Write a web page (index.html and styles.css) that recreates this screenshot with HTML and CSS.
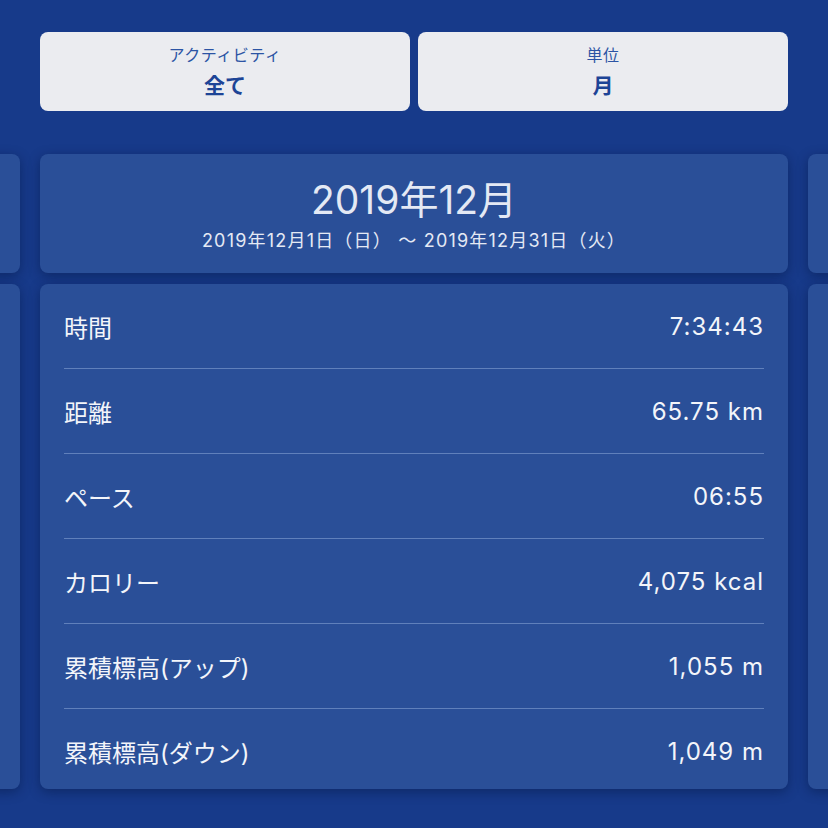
FILE: index.html
```html
<!DOCTYPE html>
<html lang="ja">
<head>
    <meta charset="UTF-8">
    <meta name="viewport" content="width=device-width, initial-scale=1.0">
    <title>集計</title>
    <link rel="stylesheet" href="styles.css">
</head>
<body>
    <div class="filters">
        <div class="filter">
            <span class="filter-label">アクティビティ</span>
            <span class="filter-value">全て</span>
        </div>
        <div class="filter">
            <span class="filter-label">単位</span>
            <span class="filter-value">月</span>
        </div>
    </div>

    <div class="pager">
        <!-- previous / next month, only the edges peek in -->
        <div class="page">
            <div class="card period"></div>
            <div class="card stats"></div>
        </div>

        <div class="page">
            <div class="card period">
                <div class="period-title">2019年12月</div>
                <div class="period-range">2019年12月1日（日） ～ 2019年12月31日（火）</div>
            </div>
            <div class="card stats">
                <div class="stat-row">
                    <span>時間</span>
                    <span class="stat-value">7:34:43</span>
                </div>
                <div class="stat-row">
                    <span>距離</span>
                    <span class="stat-value">65.75 km</span>
                </div>
                <div class="stat-row">
                    <span>ペース</span>
                    <span class="stat-value">06:55</span>
                </div>
                <div class="stat-row">
                    <span>カロリー</span>
                    <span class="stat-value">4,075 kcal</span>
                </div>
                <div class="stat-row">
                    <span>累積標高(アップ)</span>
                    <span class="stat-value">1,055 m</span>
                </div>
                <div class="stat-row">
                    <span>累積標高(ダウン)</span>
                    <span class="stat-value">1,049 m</span>
                </div>
            </div>
        </div>

        <div class="page">
            <div class="card period"></div>
            <div class="card stats"></div>
        </div>
    </div>
</body>
</html>
```

FILE: styles.css
```css
body {
    margin: 0;
    padding: 0;
    height: 828px;
    overflow: hidden;
    background-color: #173a8a;
    font-family: Inter, "Noto Sans CJK JP", sans-serif;
    color: #f3f5fa;
}

.filters {
    display: flex;
    gap: 8px;
    padding: 32px 40px 0;
}

.filter {
    flex: 1;
    height: 79px;
    box-sizing: border-box;
    padding-top: 13px;
    display: flex;
    flex-direction: column;
    align-items: center;
    background-color: #ebecf0;
    border-radius: 8px;
}

.filter-label {
    font-size: 16px;
    line-height: 20px;
    letter-spacing: 0.5px;
    color: #2c54a4;
}

.filter-value {
    margin-top: 7px;
    font-size: 21px;
    line-height: 28px;
    font-weight: bold;
    color: #1d4496;
}

.pager {
    display: flex;
    justify-content: center;
    gap: 20px;
    margin-top: 43px;
}

.page {
    flex: 0 0 748px;
    display: flex;
    flex-direction: column;
    gap: 11px;
}

.card {
    background-color: #2a4f98;
    border-radius: 8px;
    box-shadow: 0 3px 12px rgba(5, 20, 60, 0.45);
}

.period {
    height: 119px;
    box-sizing: border-box;
    padding-top: 23px;
    text-align: center;
    color: #e4e9f4;
}

.period-title {
    font-size: 39px;
    line-height: 46px;
}

.period-range {
    margin-top: 6px;
    font-size: 18px;
    line-height: 24px;
    letter-spacing: 1.2px;
}

.stats {
    height: 505px;
    padding: 0 24px;
}

.stat-row {
    height: 84px;
    display: flex;
    justify-content: space-between;
    align-items: center;
    font-size: 24px;
    border-bottom: 1px solid #6080bb;
}

.stat-row:last-child {
    border-bottom: none;
}

.stat-value {
    letter-spacing: 1px;
}
```
